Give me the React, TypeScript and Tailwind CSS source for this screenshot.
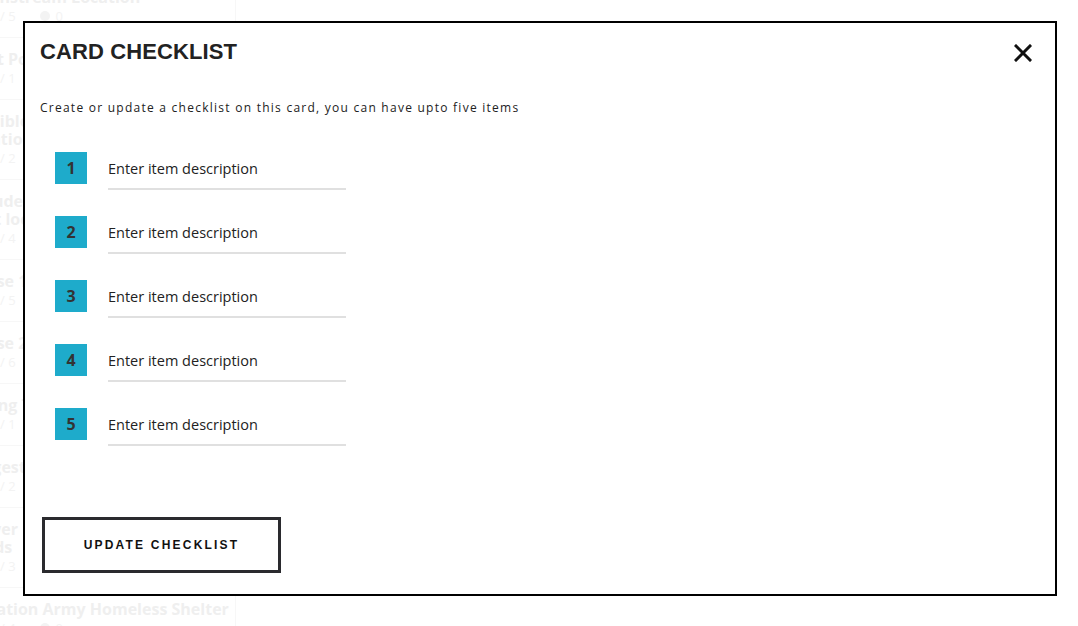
import { useState } from "react";

const bgItems = [
  { title: ["Downstream Location"], count: "5", comments: true },
  { title: ["Most Popular"], count: "1" },
  { title: ["Possible Flood", "Location"], count: "2" },
  { title: ["Include", "Boat location"], count: "4" },
  { title: ["House 1"], count: "5" },
  { title: ["House 2"], count: "6" },
  { title: ["Listing Test"], count: "1" },
  { title: ["Suggestions"], count: "2" },
  { title: ["Slower", "Roads"], count: "3" },
  { title: ["Salvation Army Homeless Shelter"], count: "4", comments: true },
];

function BackgroundList() {
  return (
    <div className="h-full w-[236px] overflow-hidden border-r border-[#f7f7f7]">
      <div className="-ml-[36px] -mt-[24px] w-[300px]">
        {bgItems.map((item, i) => (
          <div key={i} className="border-b border-[#f7f7f7] pt-3 pb-[13px]">
            {item.title.map((line, j) => (
              <div key={j} className="text-[16px] font-bold leading-[18px] text-[#efefef] whitespace-nowrap">
                {line}
              </div>
            ))}
            <div className="mt-0.5 flex items-center gap-6 pl-[36px] text-[13px] leading-4 text-[#f3f3f3]">
              <span>/ {item.count}</span>
              {item.comments && (
                <span className="flex items-center gap-1.5">
                  <span className="inline-block h-2.5 w-2.5 rounded-full bg-[#f3f3f3]" />0
                </span>
              )}
            </div>
          </div>
        ))}
      </div>
    </div>
  );
}

function CloseIcon() {
  return (
    <svg width="18" height="18" viewBox="0 0 18 18" fill="none">
      <path d="M2 2L16 16M16 2L2 16" stroke="#111" strokeWidth="3" strokeLinecap="square" />
    </svg>
  );
}

export default function App() {
  const [items, setItems] = useState(["", "", "", "", ""]);

  return (
    <div
      className="relative h-[626px] w-full overflow-hidden bg-white"
      style={{ fontFamily: '"Open Sans", "Liberation Sans", sans-serif' }}
    >
      <BackgroundList />

      {/* modal */}
      <div className="absolute left-[23px] top-[21px] flex w-[1034px] flex-col border-2 border-black bg-white pl-[15px] pr-[17px] pt-[15px] pb-[21px]">
        <div className="flex h-7 items-center justify-between">
          <h1
            className="text-[22px] font-bold leading-7 tracking-[0.1px] text-[#222]"
            style={{ fontFamily: '"Liberation Sans", Arial, sans-serif' }}
          >
            CARD CHECKLIST
          </h1>
          <button className="mr-[6px] mt-[2px]">
            <CloseIcon />
          </button>
        </div>

        <p className="mt-[33px] text-[12px] leading-[18px] tracking-[1.25px] text-[#222]">
          Create or update a checklist on this card, you can have upto five items
        </p>

        <div className="mt-[35px] flex flex-col gap-[26px] pl-[15px]">
          {items.map((val, i) => (
            <div key={i} className="flex items-start gap-[21px]">
              <div className="flex h-8 w-8 items-center justify-center bg-[#1eabcb] text-[16px] font-bold text-[#333]">
                {i + 1}
              </div>
              <input
                value={val}
                onChange={(e) => {
                  const next = [...items];
                  next[i] = e.target.value;
                  setItems(next);
                }}
                placeholder="Enter item description"
                className="h-[38px] w-[238px] border-b-2 border-[#e0e0e0] pb-1 text-[14.5px] text-[#222] placeholder:text-[#222] focus:outline-none"
              />
            </div>
          ))}
        </div>

        <button
          className="ml-[2px] mt-[71px] h-14 w-[239px] border-[3px] border-[#2a2a2e] text-[12px] font-bold tracking-[2.2px] text-[#111]"
          style={{ fontFamily: '"Liberation Sans", Arial, sans-serif' }}
        >
          UPDATE CHECKLIST
        </button>
      </div>
    </div>
  );
}
